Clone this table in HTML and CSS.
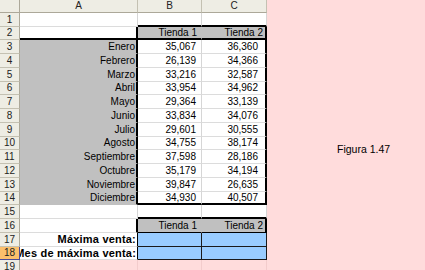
FILE: index.html
```html
<!DOCTYPE html>
<html lang="es">
<head>
<meta charset="utf-8">
<title>Figura 1.47</title>
<link rel="stylesheet" href="styles.css">
</head>
<body>
<div class="sheet">
  <div class="c corner"></div><div class="c ch">A</div><div class="c ch">B</div><div class="c ch">C</div>

  <div class="c rh">1</div><div class="c w"></div><div class="c w bb"></div><div class="c w bb"></div>

  <div class="c rh">2</div><div class="c w bb rb"></div><div class="c g bb ttl tb">Tienda 1</div><div class="c g bb rb ttl tc">Tienda 2</div>

  <div class="c rh">3</div><div class="c g rb mo">Enero</div><div class="c w nb">35,067</div><div class="c w rb nc">36,360</div>
  <div class="c rh">4</div><div class="c g rb mo">Febrero</div><div class="c w nb">26,139</div><div class="c w rb nc">34,366</div>
  <div class="c rh">5</div><div class="c g rb mo">Marzo</div><div class="c w nb">33,216</div><div class="c w rb nc">32,587</div>
  <div class="c rh">6</div><div class="c g rb mo">Abril</div><div class="c w nb">33,954</div><div class="c w rb nc">34,962</div>
  <div class="c rh">7</div><div class="c g rb mo">Mayo</div><div class="c w nb">29,364</div><div class="c w rb nc">33,139</div>
  <div class="c rh">8</div><div class="c g rb mo">Junio</div><div class="c w nb">33,834</div><div class="c w rb nc">34,076</div>
  <div class="c rh">9</div><div class="c g rb mo">Julio</div><div class="c w nb">29,601</div><div class="c w rb nc">30,555</div>
  <div class="c rh">10</div><div class="c g rb mo">Agosto</div><div class="c w nb">34,755</div><div class="c w rb nc">38,174</div>
  <div class="c rh">11</div><div class="c g rb mo">Septiembre</div><div class="c w nb">37,598</div><div class="c w rb nc">28,186</div>
  <div class="c rh">12</div><div class="c g rb mo">Octubre</div><div class="c w nb">35,179</div><div class="c w rb nc">34,194</div>
  <div class="c rh">13</div><div class="c g rb mo">Noviembre</div><div class="c w nb">39,847</div><div class="c w rb nc">26,635</div>
  <div class="c rh">14</div><div class="c g rb mo">Diciembre</div><div class="c w bb nb">34,930</div><div class="c w bb rb nc">40,507</div>

  <div class="c rh">15</div><div class="c w"></div><div class="c w bb"></div><div class="c w bb"></div>

  <div class="c rh">16</div><div class="c w rb"></div><div class="c g db ttl tb">Tienda 1</div><div class="c g db rb ttl tc">Tienda 2</div>

  <div class="c rh">17</div><div class="c w dr lbl">Máxima venta:</div><div class="c bl"></div><div class="c bl"></div>

  <div class="c rh sel">18</div><div class="c w dr lbl">Mes de máxima venta:</div><div class="c bl"></div><div class="c bl"></div>

  <div class="c rh">19</div><div class="c p"></div><div class="c p"></div><div class="c p"></div>
</div>
<div class="figure">
  <span class="caption">Figura 1.47</span>
</div>
</body>
</html>
```

FILE: styles.css
```css
html, body {
  margin: 0;
  padding: 0;
}

body {
  width: 425px;
  height: 270px;
  overflow: hidden;
  display: flex;
  align-items: flex-start;
  background: #ffdcdc;
  font-family: "Liberation Sans", Arial, sans-serif;
  font-size: 10px;
  color: #000;
}

.sheet {
  display: grid;
  grid-template-columns: 20px 118px 64px 65px;
  grid-template-rows: 13px 14px 13px 14px 14px 14px 13px 14px 14px 14px 13px 14px 14px 14px 13px 14px 14px 14px 13px 14px;
  width: 267px;
  flex: none;
  background: #fff;
}

.c {
  box-sizing: border-box;
  display: flex;
  align-items: center;
  white-space: nowrap;
  overflow: hidden;
  border-right: 1px solid #d6d6d6;
  border-bottom: 1px solid #dcdcdc;
  line-height: 1;
}

.corner,
.ch,
.rh {
  background: #eeede4;
  color: #222;
  justify-content: center;
  border-right: 1px solid #c4c1b2;
  border-bottom: 1px solid #c4c1b2;
}

.ch {
  border-bottom-color: #aca899;
}

.corner {
  border-bottom-color: #aca899;
  border-right-color: #aca899;
}

.rh {
  border-right-color: #aca899;
}

.sel {
  background: #fcc06c;
  border-right: 1px solid #4a4a96;
  border-bottom: 1px solid #4a4a96;
}

.w {
  background: #fff;
}

.g {
  background: #c0c0c0;
  border-bottom-color: #c0c0c0;
  border-right-color: #c0c0c0;
}

.bl {
  background: #99ccff;
  border-right: 1px solid #1a1a1a;
  border-bottom: 1px solid #1a1a1a;
}

.p {
  background: #ffdcdc;
  border-right-color: #f3cccc;
  border-bottom: none;
}

.bb {
  border-bottom: 2px solid #000;
}

.rb {
  border-right: 2px solid #000;
}

.db {
  border-bottom: 1px solid #000;
}

.dr {
  border-right: 1px solid #000;
}

.mo {
  justify-content: flex-end;
  padding-right: 1px;
}

.lbl {
  justify-content: flex-end;
  padding-right: 1px;
  font-weight: bold;
  font-size: 11px;
  letter-spacing: 0.2px;
}

.nb {
  justify-content: flex-end;
  padding-right: 5px;
}

.nc {
  justify-content: flex-end;
  padding-right: 7px;
}

.ttl {
  justify-content: flex-end;
}

.tb {
  padding-right: 4px;
}

.tc {
  padding-right: 2px;
}

.figure {
  flex: 1;
  align-self: stretch;
  box-sizing: border-box;
  padding: 143px 0 0 70px;
  background: #ffdcdc;
}

.caption {
  display: block;
  font-size: 10.5px;
  line-height: 12px;
  color: #000;
}
```
